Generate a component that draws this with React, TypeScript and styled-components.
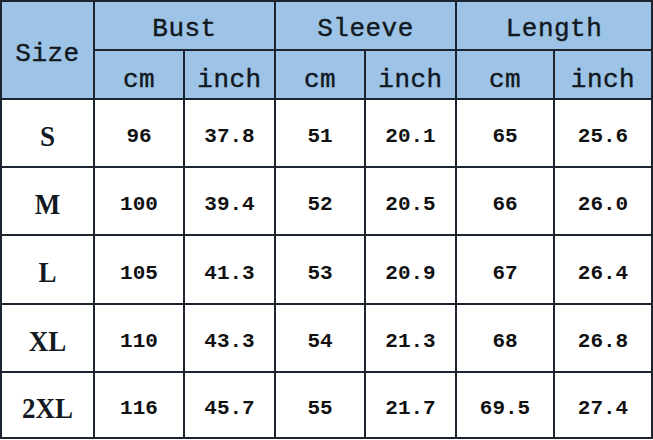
import React from "react";
import styled, { createGlobalStyle } from "styled-components";

const Global = createGlobalStyle`
  html, body { margin: 0; padding: 0; background: #ffffff; }
  #root { width: 653px; height: 440px; }
`;

const Grid = styled.div`
  display: grid;
  grid-template-columns: 91px 88px 89px 88px 89px 96px 96px;
  grid-template-rows: 47px 47px 66px 66px 67px 66px 64px;
  gap: 2px;
  padding: 2px;
  width: 653px;
  box-sizing: border-box;
  background: #1c2331;
`;

const HeadCell = styled.div<{ $col?: string; $row?: string; $shift?: number }>`
  background: #9dc3e6;
  display: flex;
  align-items: center;
  justify-content: center;
  box-sizing: border-box;
  padding-top: ${(p) => p.$shift ?? 9}px;
  grid-column: ${(p) => p.$col || "auto"};
  grid-row: ${(p) => p.$row || "auto"};
  font-family: "Liberation Mono", "DejaVu Sans Mono", monospace;
  font-size: 26px;
  letter-spacing: 0.5px;
  color: #121820;
  -webkit-text-stroke: 0.4px #121820;
`;

const SizeCell = styled.div`
  background: #ffffff;
  display: flex;
  align-items: center;
  justify-content: center;
  padding-top: 6px;
  font-family: "Liberation Serif", "Times New Roman", serif;
  font-weight: bold;
  font-size: 27px;
  color: #141a24;
`;

const Tall = styled.span`
  display: inline-block;
  transform: scaleY(1.12);
`;

const ValueCell = styled.div`
  background: #ffffff;
  display: flex;
  align-items: center;
  justify-content: center;
  padding-top: 7px;
  font-family: "Liberation Mono", "Courier New", monospace;
  font-weight: bold;
  font-size: 21px;
  color: #111111;
`;

const rows: [string, string[]][] = [
  ["S", ["96", "37.8", "51", "20.1", "65", "25.6"]],
  ["M", ["100", "39.4", "52", "20.5", "66", "26.0"]],
  ["L", ["105", "41.3", "53", "20.9", "67", "26.4"]],
  ["XL", ["110", "43.3", "54", "21.3", "68", "26.8"]],
  ["2XL", ["116", "45.7", "55", "21.7", "69.5", "27.4"]],
];

export default function App() {
  return (
    <>
      <Global />
      <Grid>
        <HeadCell $row="1 / span 2" $col="1" $shift={8}>Size</HeadCell>
        <HeadCell $col="2 / span 2" $shift={6}>Bust</HeadCell>
        <HeadCell $col="4 / span 2" $shift={6}>Sleeve</HeadCell>
        <HeadCell $col="6 / span 2" $shift={6}>Length</HeadCell>
        {["cm", "inch", "cm", "inch", "cm", "inch"].map((u, i) => (
          <HeadCell key={i} $row="2" $shift={10}>{u}</HeadCell>
        ))}
        {rows.map(([size, vals]) => (
          <React.Fragment key={size}>
            <SizeCell><Tall>{size}</Tall></SizeCell>
            {vals.map((v, i) => (
              <ValueCell key={i}>{v}</ValueCell>
            ))}
          </React.Fragment>
        ))}
      </Grid>
    </>
  );
}
